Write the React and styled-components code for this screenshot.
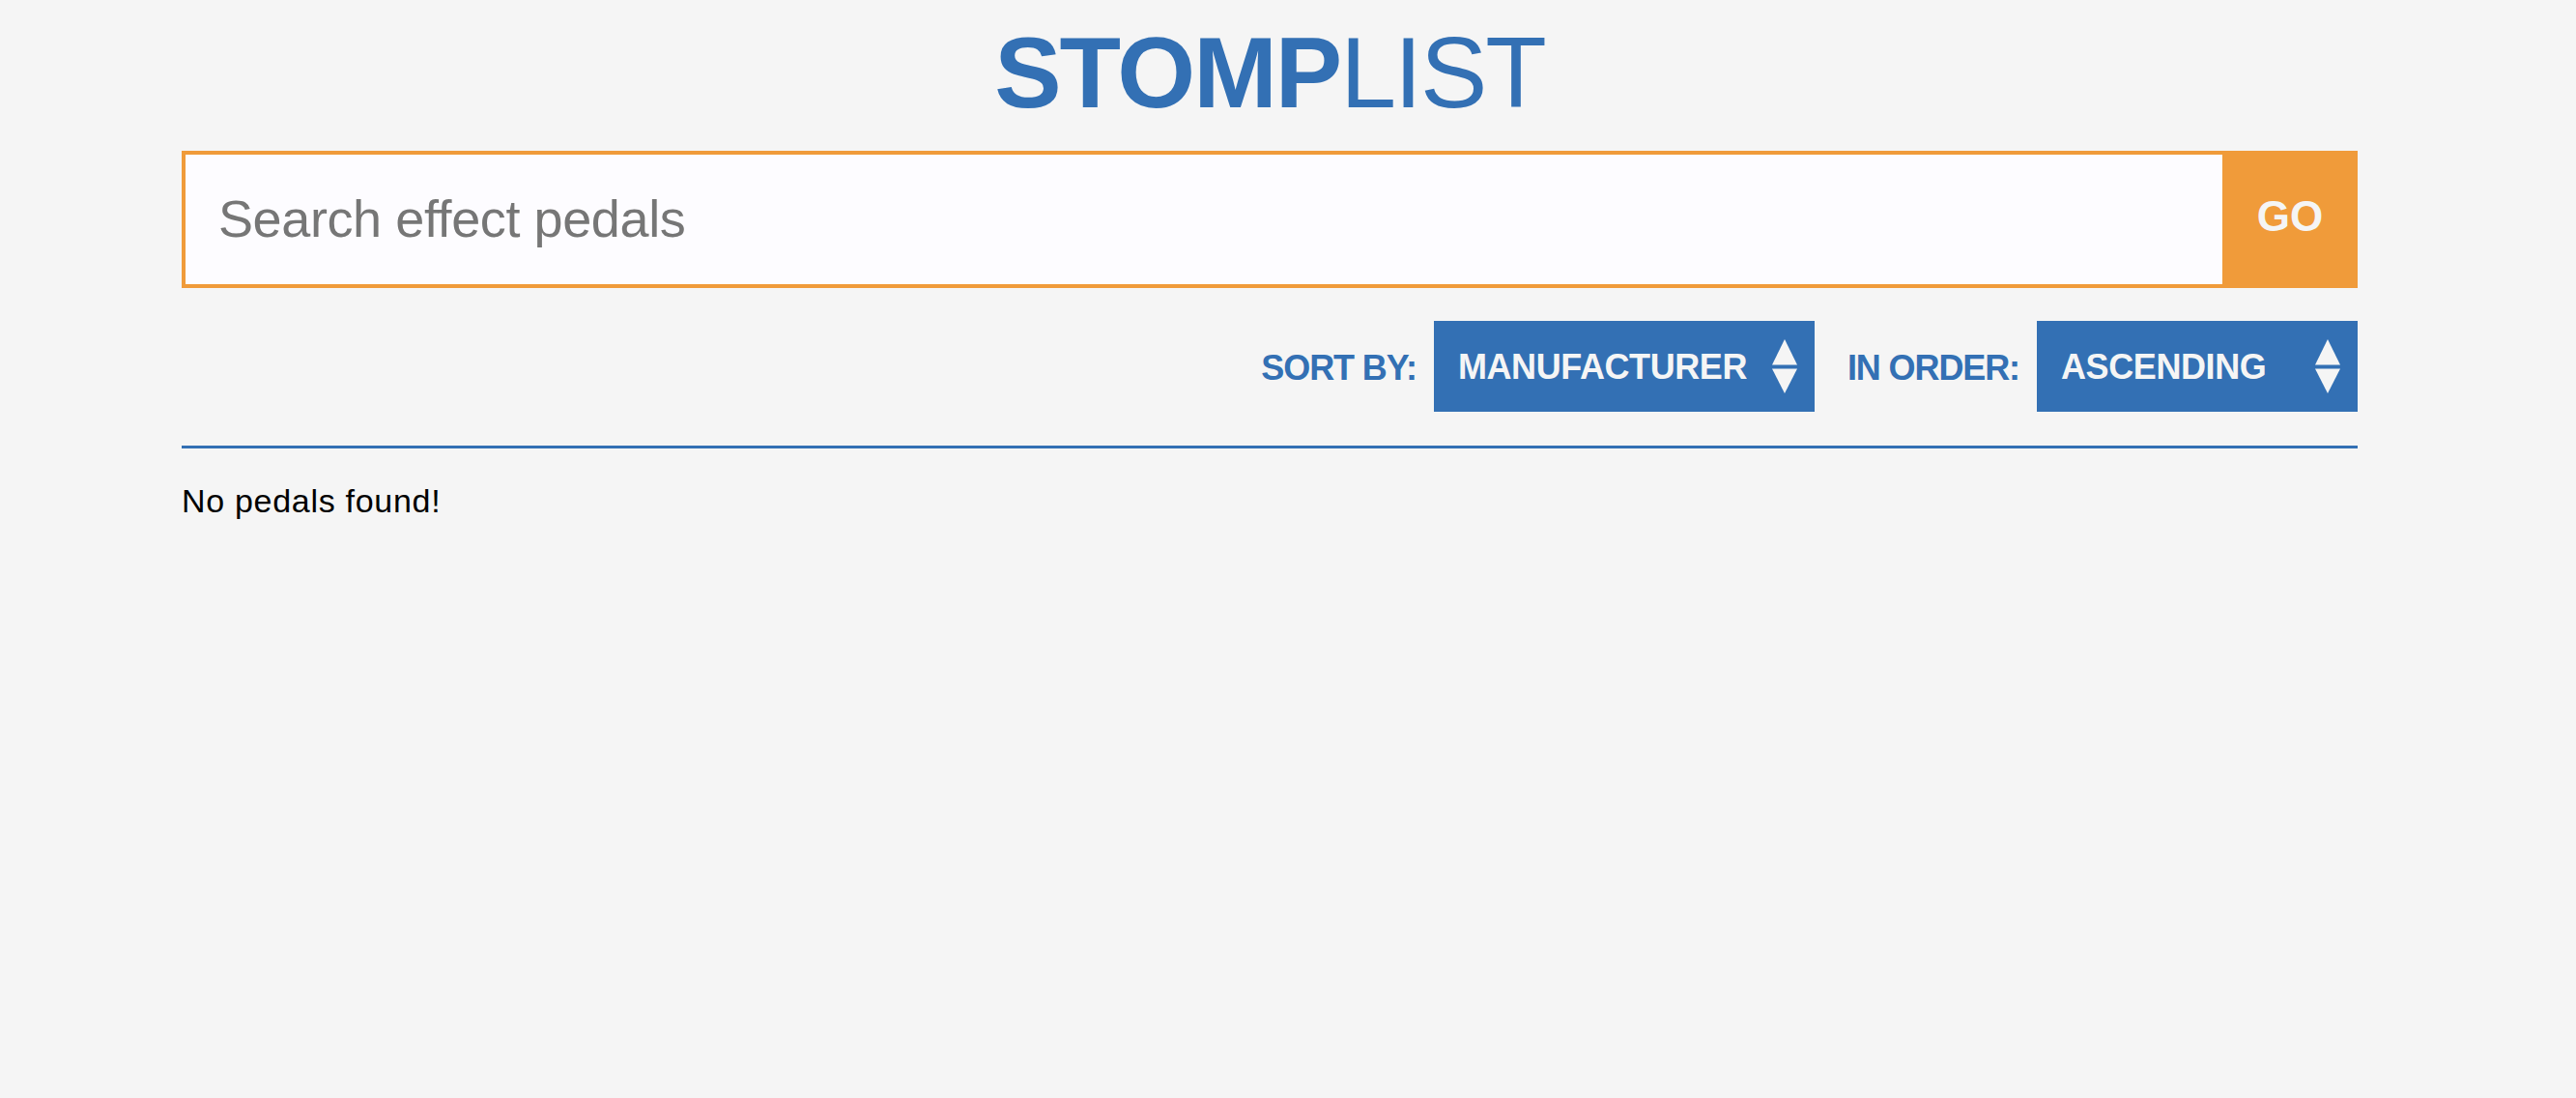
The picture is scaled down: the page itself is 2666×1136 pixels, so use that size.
import React from 'react';
import styled, { createGlobalStyle } from 'styled-components';

const BLUE = '#3370b4';
const ORANGE = '#f09b3a';
const BG = '#f5f5f5';

const GlobalStyle = createGlobalStyle`
  html, body {
    margin: 0;
    padding: 0;
    background: ${BG};
  }
  body {
    font-family: "Liberation Sans", Arial, Helvetica, sans-serif;
    color: #000;
  }
  *, *::before, *::after {
    box-sizing: border-box;
  }
`;

const Page = styled.main`
  width: 2252px;
  margin-left: 188px;
  padding-top: 15px;
`;

const Title = styled.h1`
  margin: 0;
  text-align: center;
  font-size: 104px;
  line-height: 120px;
  letter-spacing: -2px;
  font-weight: 400;
  color: ${BLUE};
`;

const TitleStrong = styled.span`
  font-weight: 700;
`;

const SearchForm = styled.form`
  display: flex;
  height: 142px;
  margin-top: 21px;
`;

const SearchInput = styled.input`
  flex: 1;
  min-width: 0;
  height: 100%;
  border: 4px solid ${ORANGE};
  border-right: none;
  border-radius: 0;
  background: #fdfcff;
  padding: 0 34px 2px;
  font-family: inherit;
  font-size: 54px;
  letter-spacing: -0.4px;
  color: #333;
  outline: none;

  &::placeholder {
    color: #767676;
    opacity: 1;
  }
`;

const GoButton = styled.button`
  width: 140px;
  height: 100%;
  border: none;
  border-radius: 0;
  background: ${ORANGE};
  color: ${BG};
  font-family: inherit;
  font-weight: 700;
  font-size: 44px;
  padding: 0 0 6px;
  cursor: pointer;
`;

const Controls = styled.div`
  display: flex;
  justify-content: flex-end;
  align-items: center;
  gap: 34px;
  margin-top: 34px;
  padding-bottom: 35px;
  border-bottom: 3px solid ${BLUE};
`;

const Field = styled.label`
  display: flex;
  align-items: center;
  gap: 18px;
`;

const LabelText = styled.span`
  font-size: 36px;
  font-weight: 700;
  letter-spacing: -1.1px;
  color: ${BLUE};
  padding-top: 3px;
`;

const SelectWrap = styled.div`
  position: relative;
  width: ${(p) => p.$width}px;
  height: 94px;
`;

const Select = styled.select`
  appearance: none;
  -webkit-appearance: none;
  width: 100%;
  height: 100%;
  border: none;
  border-radius: 0;
  outline: none;
  background: ${BLUE};
  color: ${BG};
  font-family: inherit;
  font-size: 36px;
  font-weight: 700;
  letter-spacing: -0.4px;
  padding: 0 70px 0 25px;
  cursor: pointer;
`;

const Arrows = styled.svg`
  position: absolute;
  right: 18px;
  top: 50%;
  transform: translateY(-50%);
  pointer-events: none;
`;

const Message = styled.p`
  margin: 34px 0 0;
  font-size: 34px;
  line-height: 40px;
  letter-spacing: 0.7px;
  color: #000;
`;

function SelectArrows() {
  return (
    <Arrows width="26" height="56" viewBox="0 0 26 56" aria-hidden="true">
      <polygon points="0,26.5 13,0 26,26.5" fill={BG} />
      <polygon points="0,30.5 26,30.5 13,56" fill={BG} />
    </Arrows>
  );
}

function Dropdown({ width, options, defaultValue }) {
  return (
    <SelectWrap $width={width}>
      <Select defaultValue={defaultValue}>
        {options.map((o) => (
          <option key={o} value={o}>
            {o}
          </option>
        ))}
      </Select>
      <SelectArrows />
    </SelectWrap>
  );
}

export default function App() {
  return (
    <>
      <GlobalStyle />
      <Page>
        <Title>
          <TitleStrong>STOMP</TitleStrong>LIST
        </Title>
        <SearchForm onSubmit={(e) => e.preventDefault()}>
          <SearchInput type="text" placeholder="Search effect pedals" />
          <GoButton type="submit">GO</GoButton>
        </SearchForm>
        <Controls>
          <Field>
            <LabelText>SORT BY:</LabelText>
            <Dropdown
              width={394}
              options={['MANUFACTURER', 'NAME', 'TYPE']}
              defaultValue="MANUFACTURER"
            />
          </Field>
          <Field>
            <LabelText>IN ORDER:</LabelText>
            <Dropdown
              width={332}
              options={['ASCENDING', 'DESCENDING']}
              defaultValue="ASCENDING"
            />
          </Field>
        </Controls>
        <Message>No pedals found!</Message>
      </Page>
    </>
  );
}
